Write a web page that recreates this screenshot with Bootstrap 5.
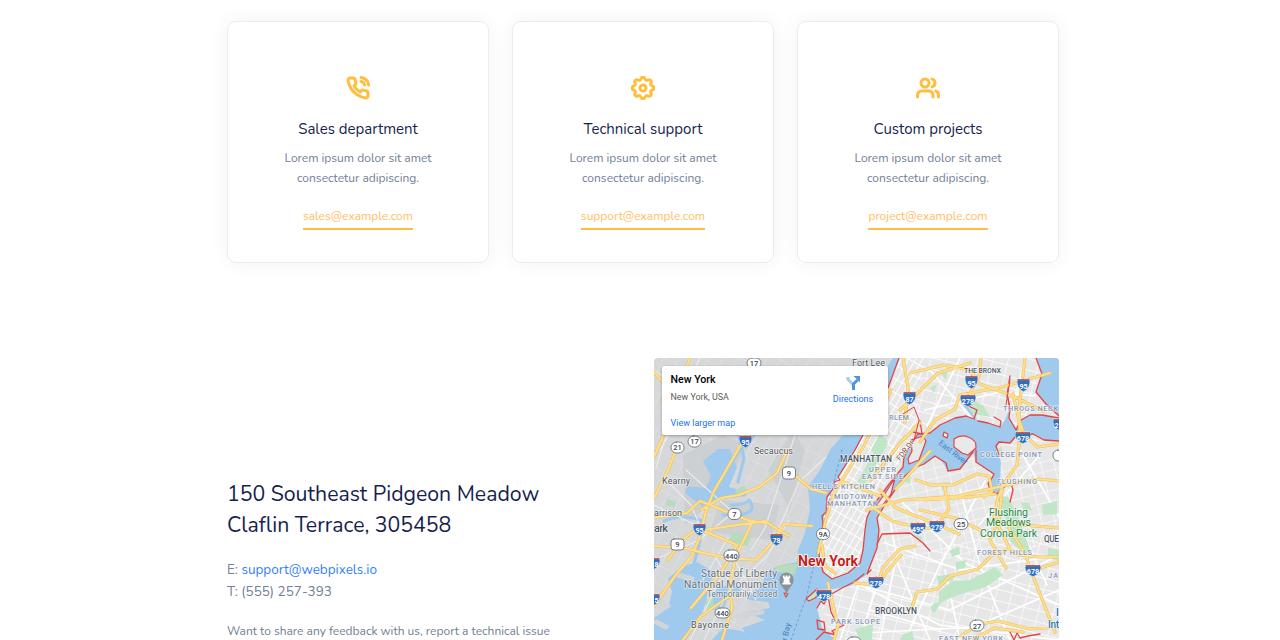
<!DOCTYPE html>
<html lang="en">
<head>
<meta charset="utf-8">
<meta name="viewport" content="width=device-width, initial-scale=1">
<title>Contact</title>
<link href="https://cdn.jsdelivr.net/npm/bootstrap@5.3.0/dist/css/bootstrap.min.css" rel="stylesheet">
<style>
body{font-family:Nunito,Lato,"Open Sans",sans-serif;color:#718096;background:#fff;height:640px;overflow:hidden}
.page{width:832px;margin-left:227px;padding-top:21px}
.contact-grid{display:grid;grid-template-columns:repeat(3,262px);column-gap:23px}
.contact-card{height:242px;border:1px solid #eaecf1;border-radius:9px;box-shadow:0 0 20px rgba(31,45,61,.055);padding-top:54px}
.contact-card svg{width:24px;height:24px;fill:none;stroke:#ffbe3d;stroke-width:3;stroke-linecap:round;stroke-linejoin:round}
.contact-card .gear{stroke-width:2.5}
.contact-card h5{font-size:15px;line-height:20px;color:#171f4f;font-weight:400;margin:19px 0 9px}
.contact-card p{font-size:12px;line-height:20px;margin:0 0 20px}
.mail{font-size:12px;line-height:17px;color:#ffbe63;text-decoration:none;border-bottom:2px solid #ffbe3d;padding-bottom:3px;height:22px}
.office{margin-top:95px;height:282px}
.address{width:405px;padding-top:121px}
.address h3{font-size:21.25px;line-height:31px;color:#171f4f;font-weight:400;margin:0 0 18px}
.reach{font-size:13.5px;line-height:22px;margin:0 0 18px}
.reach a{color:#2f80ff;text-decoration:none}
.feedback{font-size:12px;line-height:20px;white-space:nowrap;margin:0}
.map-box{width:405px;height:282px;border-radius:4px 4px 0 0;overflow:hidden;font-family:Roboto,sans-serif}
.place{left:8px;top:8px;width:226px;height:69px;background:#fff;border-radius:2px;box-shadow:0 1px 3px rgba(0,0,0,.3);padding:7px 8.5px}
.place b{font-size:10.600px;line-height:13px;font-weight:500;color:#000}
.place span{font-size:8.9px;line-height:12px;color:#5b5b5b;margin-top:5px}
.place a{font-size:9px;line-height:12px;color:#1a73e8;text-decoration:none}
.larger{margin-top:14px}
.directions{right:15px;top:9px;width:40px}
.directions a{margin-top:2px}
.lbl text{paint-order:stroke;stroke:#fff;stroke-opacity:.6;stroke-width:1.6;stroke-linejoin:round}
</style>
</head>
<body>
<main class="page">
<section class="contact-grid">
  <div class="contact-card text-center d-flex flex-column align-items-center">
    <svg viewBox="0 0 24 24"><path d="M15.05 5.500A5 5 0 0 1 18.700 8.950M15.05 1.4A9 9 0 0 1 22.600 8.94M22 16.92v3a2 2 0 0 1-2.18 2 19.79 19.79 0 0 1-8.63-3.07 19.5 19.5 0 0 1-6-6 19.79 19.79 0 0 1-3.07-8.67A2 2 0 0 1 4.11 2h3a2 2 0 0 1 2 1.72 12.84 12.84 0 0 0 .7 2.81 2 2 0 0 1-.45 2.11L8.09 9.91a16 16 0 0 0 6 6l1.27-1.27a2 2 0 0 1 2.11-.45 12.84 12.84 0 0 0 2.81.7A2 2 0 0 1 22 16.92z"/></svg>
    <h5>Sales department</h5><p>Lorem ipsum dolor sit amet<br>consectetur adipiscing.</p>
    <a class="mail" href="#">sales@example.com</a>
  </div>
  <div class="contact-card text-center d-flex flex-column align-items-center">
    <svg class="gear" viewBox="2 2 20 20"><path d="M10.325 4.317c.426-1.756 2.924-1.756 3.35 0a1.724 1.724 0 0 0 2.573 1.066c1.543-.94 3.31.826 2.37 2.37a1.724 1.724 0 0 0 1.065 2.572c1.756.426 1.756 2.924 0 3.35a1.724 1.724 0 0 0-1.066 2.573c.94 1.543-.826 3.31-2.37 2.37a1.724 1.724 0 0 0-2.572 1.065c-.426 1.756-2.924 1.756-3.35 0a1.724 1.724 0 0 0-2.573-1.066c-1.543.94-3.31-.826-2.37-2.37a1.724 1.724 0 0 0-1.065-2.572c-1.756-.426-1.756-2.924 0-3.35a1.724 1.724 0 0 0 1.066-2.573c-.94-1.543.826-3.31 2.37-2.37 1 .608 2.296.07 2.572-1.065z"/><circle cx="12" cy="12" r="2.500"/></svg>
    <h5>Technical support</h5><p>Lorem ipsum dolor sit amet<br>consectetur adipiscing.</p>
    <a class="mail" href="#">support@example.com</a>
  </div>
  <div class="contact-card text-center d-flex flex-column align-items-center">
    <svg viewBox="0 0 24 24"><path d="M17 21v-2a4 4 0 0 0-4-4H5.500a4 4 0 0 0-4 4v2M22.500 21v-2a4 4 0 0 0-2.700-3.87M16 3.13a4 4 0 0 1 0 7.75"/><circle cx="9" cy="7" r="4"/></svg>
    <h5>Custom projects</h5><p>Lorem ipsum dolor sit amet<br>consectetur adipiscing.</p>
    <a class="mail" href="#">project@example.com</a>
  </div>
</section>
<section class="office d-flex justify-content-between">
  <div class="address">
    <h3>150 Southeast Pidgeon Meadow<br>Claflin Terrace, 305458</h3>
    <p class="reach">E: <a href="#">support@webpixels.io</a><br>T: (555) 257-393</p>
    <p class="feedback">Want to share any feedback with us, report a technical issue</p>
  </div>
  <div class="map-box position-relative">
  <svg class="d-block" width="405" height="282" viewBox="654 358 405 282" fill="none" stroke-linejoin="round" stroke-linecap="round">
    <defs>
      <pattern id="g1" width="6" height="12" patternUnits="userSpaceOnUse" patternTransform="rotate(30)"><path d="M0 0H6M0 0V12" stroke="#fff" stroke-width="1.900"/></pattern>
      <pattern id="g2" width="13" height="10" patternUnits="userSpaceOnUse" patternTransform="rotate(-14)"><path d="M0 0H13M0 0V10" stroke="#fff" stroke-width="1.2"/></pattern>
      <pattern id="g3" width="15" height="11" patternUnits="userSpaceOnUse" patternTransform="rotate(14)"><path d="M0 0H15M0 0V11" stroke="#fff" stroke-width="1.3"/></pattern>
      <pattern id="g4" width="13" height="17" patternUnits="userSpaceOnUse" patternTransform="rotate(27)"><path d="M0 0H13M0 0V17" stroke="#e6e7e8" stroke-width=".8"/></pattern>
      <symbol id="shield" viewBox="0 0 13 13" preserveAspectRatio="none"><path d="M.8.5q2.8 1 5.7 0 2.9 1 5.7 0 1.7 3-.2 7.3Q10.500 11 6.500 12.700 2.500 11 1 7.800-.9 3.500.8.5z" fill="#2e6fc0" stroke="#fff" stroke-width=".5"/><path d="M1 .8q2.700 1 5.500 0 2.800 1 5.500 0l.4 1.600H.6z" fill="#d2564b"/></symbol>
    </defs>
    <path d="M654 358h405v282H654z" fill="#d5d7d8"/>
    <path d="M654 358h245L822 550 790 640H654z" fill="url(#g4)"/>
    <!-- New Jersey open land -->
    <g fill="#cdd0d2"><path d="M683 455l40-20 25 10-28 50-35 30zM720 500l60 5-10 35-60-8zM768 470l25-40 12 20-15 60z"/></g>
    <!-- Boroughs east of the Hudson -->
    <path d="M898 358L888 388 855 450 835 483 827 497 823 523 819 555 825 573 833 579 852 570 866 575 850 586 826 590 817 608 818 625 836 640H1059V358z" fill="#e7e7e8"/>
    <path d="M898 358L855 450 835 483 827 497 823 523 819 555 825 573 833 579 860 563 870 505 910 450 925 358z" fill="url(#g1)"/>
    <path d="M920 358h139v80l-65 14-80-20z" fill="url(#g3)"/>
    <path d="M876 510l35-50 148-5v90l-190 25z" fill="url(#g2)"/>
    <path d="M865 555l194-25v110H830l-10-40z" fill="url(#g3)"/>
    <g stroke="#fff" stroke-width="1.700"><path d="M850 580l90 45 119 15M866 587l84 23 109-55M870 610l70 20M905 640l35-75 45-84M930 640l-32-75-8-45M960 640l-15-70M1010 640l-30-74-20-77M1059 590l-85 37-110 6M885 543l75 27 99-14M900 500l65 63 94 42M930 370l63 73M960 358l-33 68M1025 358l-12 54M925 410l75-18 35 4M1020 450l39 67M1017 520l30 65M1040 455l-61 70M840 640l18-55M860 640l20-65M880 640l14-72"/></g>
    <!-- parks -->
    <g fill="#c1e6c7"><path d="M857 482l24-42 7 4-24 42zM871 450l8-15 8 4-10 17zM940 373l8-3-2 10zM962 397l10 17 18 3-7-12-14-7zM930 388l7-4-3 9zM939 592l13-11 18-1 25-13 8 8-17 12-28 8-16 7-8 11q-9-7 5-11zM937 576l20-3-4 7-15 4zM956 562l10-2-1 8-9 2zM950 550l9-3 1 7-8 3zM1042 505l15-4v13l-14 1zM940 484l10-2-5 11zM996 495l9 18 5 28 13 12 8-1-14-39-9-16zM1021 502l8 1 3 8-9-2zM1048 548l11 2v11l-11-4zM855 629l18-5-1 16h-12zM902 635l10-4 2 9h-14zM995 451l7-5 1 8zM902 480l9-4-1 8zM873 449l7-9 8 1-5 10zM915 535l7 2-2 6z"/></g>
    <!-- water -->
    <g fill="#9fcaee">
      <path d="M893 358L868 395 843 435 830 450 820 470 808 487 810 510 805 533 798 550 797 562 777 566 765 575 762 586 752 592 748 600 768 602 770 608 745 612 765 620 742 628 750 640H836L822 628 817 608 828 590 850 586 866 575 870 566 877 548 879 530 877 518 883 508 890 497 905 476 914 468 924 464 935 456 941 460 948 471 960 469 973 452 976 462 994 474 988 483 990 490 997 494 1003 488 1000 480 1001 462 996 449 999 442 1010 443 1017 435 1033 434 1044 440 1059 441V418L1042 415 1030 415 1021 420 1016 430 1009 418 1010 408 1005 420 1000 427 988 423 978 421 967 406 963 405 974 419 966 416 955 418 940 425 930 433 918 434 911 444 904 457 903 467 890 483 872 507 867 517 865 530 863 550 860 563 848 573 832 579 823 572 819 555 823 523 827 497 835 483 855 450 888 388 899 358z"/>
      <path d="M1036 358L1042 374 1036 392 1046 404 1059 416V358zM703 461L718 449 730 449 737 467 729 487 747 492 746 496 722 499 702 506 685 493 687 486 706 488 711 476zM697 562L714 572 708 590 706 602 700 618 686 640H654V618L668 608 672 592 668 578 684 566zM715 590L735 582 741 590 727 600 722 612 708 609zM756 640L742 631 723 628 712 640z"/>
    </g>
    <g stroke="#9fcaee" stroke-width="3.200"><path d="M664 521q20-8 38 0 0 18-8 42M731 505q15 0 18-5 7 9-2 13-8 4-24 2M738 482l6-24-8-35M694 395l18 30"/></g>
    <path d="M724 476l28-44M746 448l14-21" stroke="#9fcaee" stroke-width="2"/>
    <g stroke="#d2d5d7" stroke-width="5"><path d="M656 600l12 6M656 622l10 5M678 575l14 4M744 590l14-5M752 604l10 2M738 616l24-4"/></g>
    <g fill="#b7dcbd"><path d="M667 499l9 3-2 5-8-2zM735 490l9-4 4 5-10 6zM732 532l20 4-5 10-18-4zM705 604l8-12v14l-6 6zM694 388l6-6 1 7zM679 373l9-3 3 9-8 2zM798 564l-20 1-4 6 20 4z"/></g>
    <!-- islands -->
    <g fill="#e9e9ea" stroke="#e24444" stroke-width="1.200"><path d="M954 439q7-5 14-2 9 3 8 11l-8 7-6-2-8-6zM911 440l12-4 3 5-7 19-10 4-1-5 4-8zM944 432l4 2-1 4-4-2zM876 506l10-14 9-14-4 16-9 12z"/><path fill="#c5e8c9" d="M806 599l11-10q6 3-2 9l-6 3zM784 593l4 1-2 3z"/></g>
    <!-- shoreline -->
    <g stroke="#e24444" stroke-width="1.300">
      <path d="M899 358L888 388 855 450 838 477 840 480 834 482 835 486 827 497 826 512 822 516 823 523 819 555 823 572 832 579 848 573 860 563 863 550 865 530 867 517 872 507 890 483 903 467 904 457 911 444 918 434 930 433 940 425 955 418 966 416 974 419 977 410 962 403M978 421L988 423 1000 427 1001 421 994 417M1010 376L1007 395 1010 408 1009 418 1016 430 1021 420 1030 415 1042 415 1059 418M1059 441L1044 440 1033 434 1017 435 1010 443 999 442 996 446 999 455M973 452L960 469 948 471 946 463 935 456 924 464 914 468 905 476 890 497 883 508 877 518 879 530 877 548 870 566 867 574 871 570M976 450L976 462 994 474 991 480 988 483 990 490 997 494 1003 488 1011 483 1013 490 1010 502"/>
      <path d="M1036 358L1042 374 1036 392 1046 404 1059 416M817 608l4-7 3 3 4-8 3 16 5 10 8 3-12 6 4 4-12-3-8 8 11 13M828 596l14-8 12-6 10-8M877 544l5-10 28-1 13 10 7 8M1010 632l4 8 3-7 3 5 8-2 12-2M817 620l7 2 1 8-7-1zM913 432l9 2-2-13"/>
    </g>
    <path d="M842 450l-20 80-15 65-16 45" stroke="#6390c6" stroke-width=".8" stroke-dasharray="2 3"/>
    <!-- secondary streets -->
    <g stroke="#ebeced" stroke-width="1.100"><path d="M654 370l16 12 12 30 20 30M654 505l42 20M700 358l-30 65-14 45M660 450l44-76M654 560l45-20 30-24M686 470l50 45M772 544l27-62 27-25M713 552l20 36 34-32 22-36M666 480l25 25 13 30M701 583l27-45M756 600l-20-38M795 435l-30 93-14 22M690 640l30-60M704 640l26-52"/></g>
    <!-- highways -->
    <g stroke="#eec05f" stroke-width="3.200"><path id="roads" d="M654 372l14 16-6 12M690 358l-11 30-8 30-17 39M756 420l-17 28-25 43-8 20-6 25-8 20-17 20-21 30M675 452l-6 16-15 30M654 546l30 2 20 5 24 5 28 2M654 518l33-5 13-12 20 8 30 12 16 2M701 510l20-12 18-3 20-8 18-14 11-24M697 531l40-6 28-4 12 8 12 7M697 529l-15 11-14 20M697 528l40 17-10 18-10 14-26 31M722 640l10-32-2-24 6-28 17-35M756 560l15-16 13-20 28 2M731 595l-30 21-18 24M786 468l25 21 15 4M843 482l37 14M818 553l8-34 9-28 29-45 27-56M822 545l3 21 10 7M828 583l4 18 6 25-4 14M855 583l22 2 12-16 12-14M872 507l20 14 20 5 25 3M867 510l36-10 55-4 45-10 36-7 20 2M880 490l16 18 40 16 23 10M896 489l34-38M905 437l-34 43M920 423l-16 16M900 410l38-37 32-10M920 442l15-22 20-11 5-14 42-8 48-14M903 358l5 30-3 35M910 373l34-8 26 5 10 14 33 12 30 15M968 397l11-21 2-18M1025 358l-5 42-1 20 4 11M1013 394l6 26 1 15-3 30-14 20-6 16-3 16 15 30M916 480l15 5 22 0 24-11 12 2 3 15-8 6M944 484l5 25-8 11M920 510l35 8 25 12M995 494l-26 3-45 3M999 523l60 5M1002 490l-3 30-9 20 16 28M1059 557h-20l-20-2-10-6-17 6-14 14-28 7-13 13-20 3-5 15M876 586l8-20 16-17 15-3M1009 528l17 27 3 11 26 66M1059 562l-25 8M960 636l20-12 18-3 31 8 30-2M970 640l25-12 28 4M1023 432l14 15 22-3"/></g>
    <use href="#roads" stroke="#fddf8d" stroke-width="2"/>
    <path d="M903 414l11-7 5 13-5 20M1006 405l4-25M1008 397l2 15" stroke="#e24444"/>
    <!-- route markers -->
    <g font-family="Roboto,sans-serif" font-size="7.200" font-weight="700" text-anchor="middle" fill="#fff">
        <use href="#shield" x="739" y="435" width="13" height="13"/><text x="745.500" y="445">95</text>
        <use href="#shield" x="903" y="391" width="13" height="14"/><text x="909.500" y="401.500">87</text>
        <use href="#shield" x="965" y="375" width="13" height="14"/><text x="971.500" y="385.500">95</text>
        <use href="#shield" x="1017" y="378" width="13" height="14"/><text x="1023.500" y="389">95</text>
        <use href="#shield" x="960" y="394" width="16" height="13"/><text x="968" y="404">278</text>
        <use href="#shield" x="1015" y="431" width="16" height="13"/><text x="1023" y="441">678</text>
        <use href="#shield" x="1053" y="418" width="13" height="13"/><text x="1056.500" y="428" font-size="6.500">2</text>
        <use href="#shield" x="693" y="523" width="13" height="13"/><text x="699.500" y="533">95</text>
        <use href="#shield" x="770" y="533" width="13" height="13"/><text x="776.500" y="543">78</text>
        <use href="#shield" x="910" y="522" width="16" height="13"/><text x="918" y="532">495</text>
        <use href="#shield" x="929" y="520" width="16" height="13"/><text x="937" y="530">278</text>
        <use href="#shield" x="868" y="576" width="16" height="13"/><text x="876" y="586">278</text>
        <use href="#shield" x="816" y="589" width="16" height="13"/><text x="824" y="599">478</text>
        <use href="#shield" x="1025" y="564" width="16" height="13"/><text x="1033" y="574">678</text>
        <use href="#shield" x="647" y="557" width="13" height="13"/><text x="656.500" y="567">8</text>
        <use href="#shield" x="647" y="593" width="13" height="13"/><text x="656.500" y="603">5</text>
    </g>
    <g fill="#fff" stroke="#69757d" stroke-width=".9"><rect x="747" y="358" width="14" height="10" rx="5"/><rect x="671" y="442" width="13" height="11" rx="5.500"/><rect x="688" y="436" width="13" height="11" rx="5.500"/><rect x="782.500" y="467" width="13" height="12" rx="3"/><rect x="728" y="508.500" width="13" height="11" rx="5"/><rect x="816.500" y="528.500" width="13" height="11" rx="5"/><rect x="671" y="539" width="13" height="11" rx="3"/><rect x="724" y="550" width="15" height="11" rx="5"/><rect x="715" y="608" width="15" height="10" rx="5"/><rect x="954" y="518.500" width="14" height="11" rx="5.500"/><rect x="970" y="620" width="14" height="11" rx="5.500"/><rect x="1053" y="450" width="13" height="11" rx="5"/><rect x="847" y="637" width="14" height="11" rx="5"/></g>
    <g font-family="Roboto,sans-serif" font-size="7.500" font-weight="500" text-anchor="middle" fill="#3e4a52"><text x="754" y="366">17</text><text x="677.500" y="450">21</text><text x="694.500" y="444">17</text><text x="789" y="476">9</text><text x="734.500" y="517">7</text><text x="823" y="537">9A</text><text x="677.500" y="547">9</text><text x="731.500" y="558.500">440</text><text x="722.500" y="616">440</text><text x="961" y="527">25</text><text x="977" y="628.500">27</text></g>
    <path d="M786.500 595q-1-5-4-8-6-7-1-12.500 5-4 10 0 5 5.500-1 12.500-3 3-4 8z" fill="#8a9299"/><path d="M783 575.500h1.500v1.200h1.200v-1.200h1.800v1.200h1.200v-1.200h1.500v3h-1l.7 4.500h1v1.600h-8.600V583h1l.7-4.500h-1z" fill="#fff"/>
    <!-- place names -->
    <g class="lbl" font-family="Roboto,sans-serif">
      <g font-size="9" fill="#4e565f"><text x="852" y="365.500" textLength="33">Fort Lee</text><text x="754" y="453.500" textLength="39">Secaucus</text><text x="662" y="483.500" textLength="28">Kearny</text><text x="654" y="515.500" textLength="28">arrison</text><text x="691" y="627.500" textLength="38">Bayonne</text><text x="654" y="531.500" font-size="11" font-weight="500" textLength="14">ark</text></g>
      <g font-size="8.400" font-weight="500" fill="#4b5769"><text x="840" y="462" textLength="52">MANHATTAN</text><text x="875" y="613.500" textLength="42">BROOKLYN</text><text x="1044" y="542" textLength="15">QUE</text><text x="964" y="373" font-size="7" textLength="37">THE BRONX</text></g>
      <g font-size="7.300" font-weight="500" fill="#8496b1"><text x="869" y="472" textLength="27">UPPER</text><text x="862" y="479" textLength="41">EAST SIDE</text><text x="812" y="489" textLength="63">HELL'S KITCHEN</text><text x="834" y="499" textLength="39">MIDTOWN</text><text x="827" y="506" textLength="51">MANHATTAN</text><text x="889" y="420" textLength="20">RLEM</text><text x="1003" y="411" textLength="55">THROGS NECK</text><text x="980" y="457" textLength="62">COLLEGE POINT</text><text x="997" y="484" textLength="40">FLUSHING</text><text x="977" y="555" textLength="55">FOREST HILLS</text><text x="831" y="623.500" textLength="49">PARK SLOPE</text><text x="939" y="641" textLength="64">EAST NEW YORK</text><text x="1048" y="578" textLength="10">JA</text></g>
      <g font-size="10.500" text-anchor="middle" fill="#238846"><text x="1008.500" y="515.500" textLength="39">Flushing</text><text x="1008.500" y="526" textLength="45">Meadows</text><text x="1008.500" y="536.500" textLength="57">Corona Park</text></g>
      <g font-size="10.300" text-anchor="end" fill="#69727b"><text x="777" y="577" textLength="76">Statue of Liberty</text><text x="777" y="587.500" textLength="93">National Monument</text><text x="777" y="596.500" font-size="8.200" textLength="70">Temporarily closed</text></g>
      <text x="798" y="565.500" font-size="13.800" font-weight="700" fill="#c51e18" textLength="60" lengthAdjust="spacingAndGlyphs" style="stroke-opacity:1">New York</text>
      <g font-size="10" font-weight="500" fill="#2479bd"><text x="1056" y="616">I</text><text x="1048" y="627.500" textLength="11">Int</text></g>
    </g>
    <g font-family="Roboto,sans-serif" font-size="8" fill="#457eba"><text transform="translate(787 641) rotate(-78)">r Bay</text><text transform="translate(938 444) rotate(38)" textLength="34">East River</text></g>
    <text transform="translate(900 461) rotate(-52)" font-family="Roboto,sans-serif" font-size="7.500" fill="#76502c" stroke="#fff" stroke-width="1" paint-order="stroke">FDR Dr</text>
  </svg>
  <div class="place position-absolute">
    <div class="d-flex flex-column"><b>New York</b><span>New York, USA</span><a class="larger" href="#">View larger map</a></div>
    <div class="directions position-absolute d-flex flex-column align-items-center">
      <svg width="15" height="16" viewBox="0 0 15 16" fill="none"><path d="M2 2v2.500l5 5" stroke="#aacbee" stroke-width="3"/><path d="M7.500 15V9l4-4" stroke="#5094dc" stroke-width="3"/><path d="M7.500 1H14v6.500z" fill="#5094dc"/></svg>
      <a href="#">Directions</a>
    </div>
  </div>
  </div>
</section>
</main>
<script src="https://cdn.jsdelivr.net/npm/bootstrap@5.3.0/dist/js/bootstrap.bundle.min.js"></script>
</body>
</html>
